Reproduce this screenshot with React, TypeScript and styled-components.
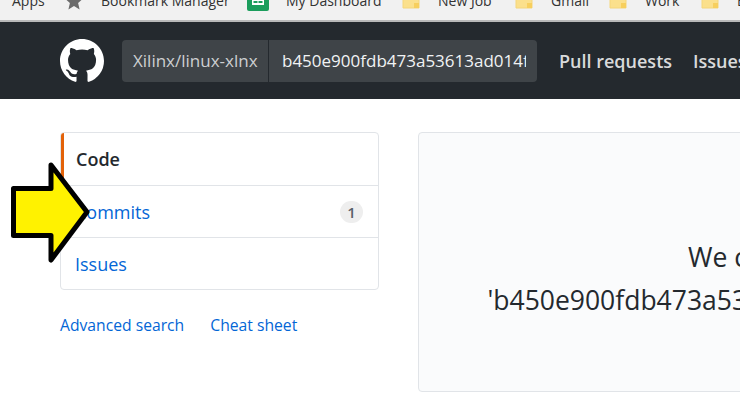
import React from "react";
import styled, { createGlobalStyle } from "styled-components";

const Global = createGlobalStyle`
  html, body {
    margin: 0;
    padding: 0;
    background: #fff;
    overflow: hidden;
  }
  body {
    font-family: "Open Sans", "Noto Sans", "Liberation Sans", sans-serif;
  }
`;

const Page = styled.div`
  position: relative;
  width: 740px;
  height: 409px;
  overflow: hidden;
`;

const BookmarkBar = styled.div`
  display: flex;
  align-items: flex-end;
  gap: 20px;
  height: 20px;
  padding-left: 12px;
  background: #f1f1f1;
  border-bottom: 2px solid #b9b9b9;
  overflow: hidden;
  white-space: nowrap;
`;

const Bookmark = styled.span<{ $width: number; $gap?: number }>`
  display: flex;
  flex: none;
  align-items: center;
  gap: ${(p) => p.$gap ?? 18}px;
  width: ${(p) => p.$width}px;
  padding-bottom: 9px;
  font-size: 14px;
  line-height: 20px;
  color: #333;

  svg {
    flex: none;
  }
`;

const Header = styled.header`
  display: flex;
  align-items: center;
  height: 77px;
  padding-left: 60px;
  background: #24292e;
  white-space: nowrap;
`;

const Logo = styled.svg`
  flex: none;
  width: 44px;
  height: 44px;
  margin-right: 18px;
  fill: #fff;
`;

const Search = styled.div`
  display: flex;
  flex: none;
  width: 415px;
  height: 42px;
  margin-right: 22px;
  background: #3f4448;
  border-radius: 4px;
  overflow: hidden;
  line-height: 42px;
`;

const Scope = styled.div`
  flex: none;
  width: 147px;
  box-sizing: border-box;
  padding-left: 11px;
  font-size: 17px;
  color: #cdcfd1;
  border-right: 1px solid #24292e;
`;

const Query = styled.div`
  flex: 1;
  margin: 0 11px 0 13px;
  font-size: 17px;
  color: #f1f3f4;
  overflow: hidden;
`;

const NavLink = styled.a`
  flex: none;
  margin-right: 21px;
  font-size: 18px;
  font-weight: 600;
  color: #d9dadb;
`;

const Main = styled.main`
  display: flex;
  align-items: flex-start;
  gap: 39px;
  padding: 33px 0 0 60px;
`;

const Sidebar = styled.aside`
  flex: none;
  width: 319px;
`;

const Menu = styled.nav`
  border: 1px solid #e1e4e8;
  border-radius: 4px;
  overflow: hidden;
`;

const MenuRow = styled.div<{ $selected?: boolean }>`
  display: flex;
  box-sizing: border-box;
  align-items: center;
  justify-content: space-between;
  height: 52px;
  padding: 0 15px 0 ${(p) => (p.$selected ? "12px" : "14px")};
  border-left: ${(p) => (p.$selected ? "3px solid #e36209" : "none")};
  font-size: 18px;
  font-weight: ${(p) => (p.$selected ? 600 : 400)};
  color: ${(p) => (p.$selected ? "#24292e" : "#0366d6")};

  & + & {
    border-top: 1px solid #e1e4e8;
  }
`;

const Counter = styled.span`
  display: flex;
  align-items: center;
  justify-content: center;
  width: 23px;
  height: 22px;
  border-radius: 11px;
  background: #eeeeee;
  font-size: 15px;
  font-weight: 600;
  color: #586069;
`;

const SearchLinks = styled.div`
  display: flex;
  gap: 26px;
  margin-top: 24px;
  font-size: 15.7px;
  line-height: 22px;
  color: #0366d6;
`;

const Blankslate = styled.section`
  flex: none;
  box-sizing: border-box;
  width: 980px;
  height: 260px;
  padding-top: 103px;
  background: #fafbfc;
  border: 1px solid #e1e4e8;
  border-radius: 4px;
  text-align: center;
  white-space: nowrap;
`;

const Message = styled.h3`
  margin: 0;
  font-size: 26.5px;
  font-weight: 400;
  line-height: 43px;
  color: #24292e;
`;

const MessageTarget = styled(Message)`
  padding-right: 14px;
`;

const ArrowOverlay = styled.svg`
  position: absolute;
  left: 0;
  top: 150px;
  width: 100px;
  height: 125px;
`;

const Folder = () => (
  <svg width="18" height="16" viewBox="0 0 18 16">
    <path d="M1 1h7l2 2h7v12H1z" fill="#fbe08c" stroke="#f5d67a" />
    <rect x="12" y="10" width="5" height="5" fill="#f7cf5e" />
  </svg>
);

const Star = () => (
  <svg width="18" height="18" viewBox="0 0 18 18">
    <path d="M9 0l2.6 6.2 6.4.5-4.9 4.2 1.5 6.6L9 14l-5.6 3.5 1.5-6.6L0 6.7l6.4-.5z" fill="#6b6b6b" />
  </svg>
);

const Sheet = () => (
  <svg width="22" height="20" viewBox="0 0 22 20">
    <rect width="22" height="20" rx="2" fill="#1b9d5c" />
    <path d="M5 3h12v11H5z" fill="#fff" />
    <path d="M6.5 7h4v2h-4zM11.5 7h4v2h-4zM6.5 10h4v2h-4zM11.5 10h4v2h-4z" fill="#1b9d5c" />
  </svg>
);

const App: React.FunctionComponent = () => {
  return (
    <Page>
      <Global />
      <BookmarkBar>
        <Bookmark $width={33}>Apps</Bookmark>
        <Bookmark $width={162}>
          <Star />
          Bookmark Manager
        </Bookmark>
        <Bookmark $width={135} $gap={17}>
          <Sheet />
          My Dashboard
        </Bookmark>
        <Bookmark $width={93}>
          <Folder />
          New Job
        </Bookmark>
        <Bookmark $width={74}>
          <Folder />
          Gmail
        </Bookmark>
        <Bookmark $width={72}>
          <Folder />
          Work
        </Bookmark>
        <Bookmark $width={60}>
          <Folder />
          Bills
        </Bookmark>
      </BookmarkBar>
      <Header>
        <Logo viewBox="0 0 16 16">
          <path d="M8 0C3.58 0 0 3.58 0 8c0 3.54 2.29 6.53 5.47 7.59.4.07.55-.17.55-.38 0-.19-.01-.82-.01-1.49-2.01.37-2.53-.49-2.69-.94-.09-.23-.48-.94-.82-1.13-.28-.15-.68-.52-.01-.53.63-.01 1.08.58 1.23.82.72 1.21 1.87.87 2.33.66.07-.52.28-.87.51-1.07-1.78-.2-3.64-.89-3.64-3.95 0-.87.31-1.59.82-2.15-.08-.2-.36-1.02.08-2.12 0 0 .67-.21 2.2.82.64-.18 1.32-.27 2-.27.68 0 1.36.09 2 .27 1.53-1.04 2.2-.82 2.2-.82.44 1.1.16 1.92.08 2.12.51.56.82 1.27.82 2.15 0 3.07-1.87 3.75-3.65 3.95.29.25.54.73.54 1.48 0 1.07-.01 1.93-.01 2.2 0 .21.15.46.55.38A8.013 8.013 0 0016 8c0-4.42-3.58-8-8-8z" />
        </Logo>
        <Search>
          <Scope>Xilinx/linux-xlnx</Scope>
          <Query>b450e900fdb473a53613ad014f</Query>
        </Search>
        <NavLink>Pull requests</NavLink>
        <NavLink>Issues</NavLink>
      </Header>
      <Main>
        <Sidebar>
          <Menu>
            <MenuRow $selected>Code</MenuRow>
            <MenuRow>
              Commits
              <Counter>1</Counter>
            </MenuRow>
            <MenuRow>Issues</MenuRow>
          </Menu>
          <SearchLinks>
            <span>Advanced search</span>
            <span>Cheat sheet</span>
          </SearchLinks>
        </Sidebar>
        <Blankslate>
          <Message>We couldn't find any code matching</Message>
          <MessageTarget>'b450e900fdb473a53613ad014f1d6a4f8c0d0f6d' in Xilinx/linux-xlnx</MessageTarget>
        </Blankslate>
      </Main>
      <ArrowOverlay viewBox="0 150 100 125">
        <path
          d="M13.5 188.5H51V165L87 212 51 260V235.5H13.5z"
          fill="#fff200"
          stroke="#000"
          strokeWidth="5"
          strokeLinejoin="round"
        />
      </ArrowOverlay>
    </Page>
  );
};

export default App;
